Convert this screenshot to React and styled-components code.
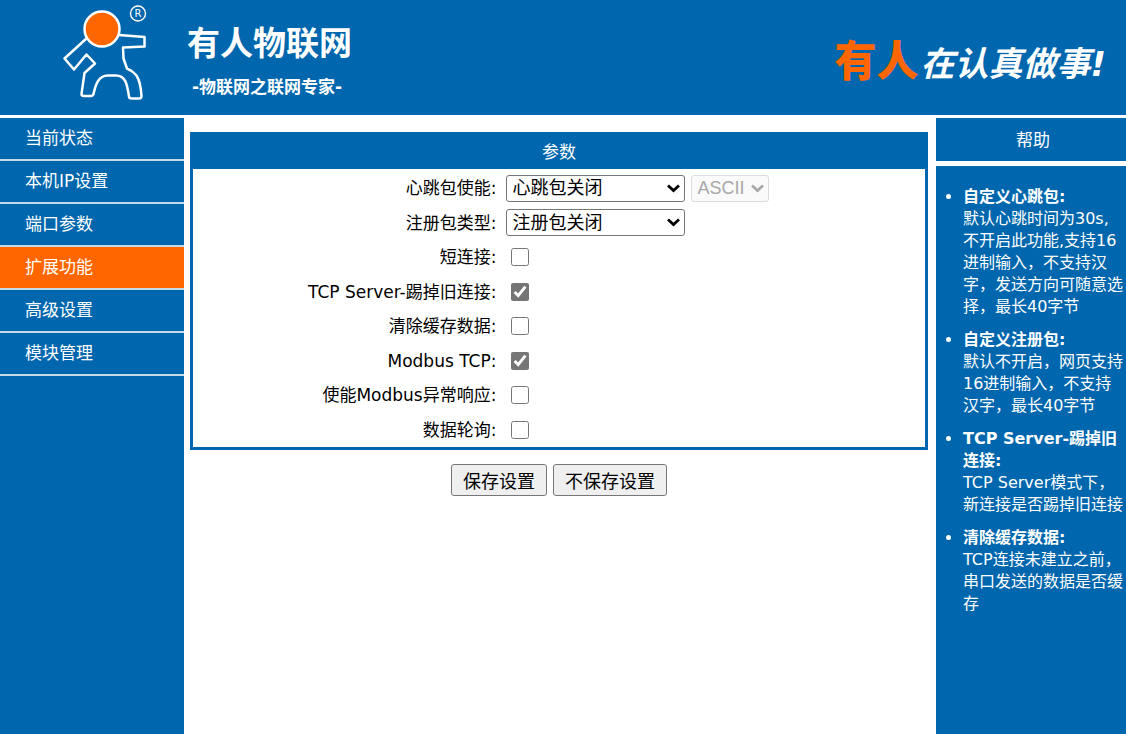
import { useState } from "react";
import styled, { createGlobalStyle } from "styled-components";

const GlobalStyle = createGlobalStyle`
  * {
    box-sizing: border-box;
  }

  body {
    margin: 0;
    background: #fff;
    font-family: "DejaVu Sans", "Noto Sans CJK SC", sans-serif;
    font-size: 17px;
    line-height: 22px;
    color: #000;
  }
`;

const Page = styled.div`
  display: flex;
  flex-direction: column;
  min-height: 100vh;
`;

const Header = styled.header`
  display: flex;
  align-items: flex-start;
  padding: 0 20px 7px 56px;
  background: #0066ad;
  border-bottom: 3px solid #fff;
  color: #fff;
`;

const Logo = styled.svg`
  width: 100px;
  height: 108px;
  flex-shrink: 0;
`;

const Brand = styled.div`
  margin-left: 31px;
  padding-top: 20px;
`;

const BrandName = styled.h1`
  margin: 0;
  font-size: 33px;
  line-height: 48px;
`;

const BrandNote = styled.p`
  margin: 8px 0 0 5px;
  font-weight: bold;
`;

const Slogan = styled.p`
  margin: 0 0 0 auto;
  padding-top: 32px;
  font-size: 34px;
  line-height: 60px;
  font-weight: bold;
  font-style: italic;
  white-space: nowrap;

  strong {
    margin-right: 2px;
    font-size: 42px;
    font-style: normal;
    color: #ff6600;
  }
`;

const Columns = styled.div`
  flex: 1;
  display: grid;
  grid-template-columns: 184px minmax(0, 1fr) 190px;
`;

const Nav = styled.nav`
  background: #0066ad;
`;

const NavLink = styled.a`
  display: block;
  padding: 9px 25px 10px;
  border-bottom: 2px solid #c4daea;
  background: ${props => props.$active ? "#ff6600" : "#0066ad"};
  color: #fff;
  text-decoration: none;
`;

const Main = styled.main`
  padding: 14px 8px 0 6px;
`;

const Panel = styled.section`
  border: 3px solid #0066ad;
`;

const PanelTitle = styled.h2`
  margin: 0;
  padding: 6px 0;
  background: #0066ad;
  color: #fff;
  font-size: 17px;
  font-weight: normal;
  text-align: center;
`;

const Fields = styled.div`
  display: grid;
  grid-auto-rows: 1fr;
  min-height: 278px;
  padding-top: 2px;
`;

const Field = styled.div`
  display: grid;
  grid-template-columns: 42% 1fr;
  align-items: center;
  gap: 6px;
`;

const Label = styled.label`
  padding-right: 4px;
  text-align: right;
`;

const Controls = styled.div`
  display: flex;
  align-items: center;
  gap: 6px;
`;

const SelectBox = styled.div`
  position: relative;
  display: flex;
  width: ${props => props.$small ? "78px" : "179px"};

  svg {
    position: absolute;
    right: 5px;
    top: 9px;
    width: 13px;
    height: 9px;
    color: ${props => props.$small ? "#a8a8a8" : "#000"};
    pointer-events: none;
  }
`;

const Select = styled.select`
  appearance: none;
  width: 100%;
  height: 27px;
  padding: 0 5px;
  border: 1px solid #767676;
  border-radius: 3px;
  background: #fff;
  color: #000;
  font-family: "Liberation Sans", "Noto Sans CJK SC", sans-serif;
  font-size: 18px;

  &:disabled {
    border-color: #dcdcdc;
    background: #fafafa;
    color: #a8a8a8;
    opacity: 1;
  }
`;

const Checkbox = styled.input`
  width: 18px;
  height: 18px;
  margin: 0 5px;
  accent-color: #767676;
`;

const Actions = styled.div`
  display: flex;
  justify-content: center;
  gap: 6px;
  padding-top: 14px;
`;

const Button = styled.button`
  height: 32px;
  padding: 0 11px;
  border: 1px solid #767676;
  border-radius: 3px;
  background: #efefef;
  color: #000;
  font-family: "Liberation Sans", "Noto Sans CJK SC", sans-serif;
  font-size: 18px;
`;

const Help = styled.aside`
  display: flex;
  flex-direction: column;
  gap: 5px;
  min-width: 0;
  color: #fff;
`;

const HelpTitle = styled.h2`
  margin: 0;
  padding: 11px 0 10px 4px;
  background: #0066ad;
  font-size: 17px;
  font-weight: normal;
  text-align: center;
`;

const HelpList = styled.ul`
  flex: 1;
  margin: 0;
  padding: 20px 3px 20px 27px;
  background: #0066ad;
  font-size: 16px;
`;

const HelpItem = styled.li`
  margin-bottom: 11px;

  b {
    display: block;
  }
`;

const menu = ["当前状态", "本机IP设置", "端口参数", "扩展功能", "高级设置", "模块管理"];

const switches = [
    { id: "short", label: "短连接:", on: false },
    { id: "kick", label: "TCP Server-踢掉旧连接:", on: true },
    { id: "clear", label: "清除缓存数据:", on: false },
    { id: "modbus", label: "Modbus TCP:", on: true },
    { id: "exception", label: "使能Modbus异常响应:", on: false },
    { id: "poll", label: "数据轮询:", on: false },
];

const help = [
    { title: "自定义心跳包:", text: "默认心跳时间为30s,不开启此功能,支持16进制输入，不支持汉字，发送方向可随意选择，最长40字节" },
    { title: "自定义注册包:", text: "默认不开启，网页支持16进制输入，不支持汉字，最长40字节" },
    { title: "TCP Server-踢掉旧连接:", text: "TCP Server模式下，新连接是否踢掉旧连接" },
    { title: "清除缓存数据:", text: "TCP连接未建立之前，串口发送的数据是否缓存" },
];

function Chevron() {
    return (
        <svg viewBox="0 0 13 9" fill="none" stroke="currentColor" strokeWidth="2.8" aria-hidden="true">
            <path d="M1 1.5 6.5 6.5 12 1.5" />
        </svg>
    );
}

function Dropdown({ id, options, small, ...rest }) {
    return (
        <SelectBox $small={small}>
            <Select id={id} {...rest}>
                {options.map(option => <option key={option}>{option}</option>)}
            </Select>
            <Chevron />
        </SelectBox>
    );
}

export default function App() {
    const [checked, setChecked] = useState(
        Object.fromEntries(switches.map(item => [item.id, item.on]))
    );

    return (
        <>
            <GlobalStyle />
            <Page>
                <Header>
                    <Logo viewBox="0 0 100 108" fill="none" stroke="#fff" strokeLinejoin="round" role="img" aria-label="USR">
                        <path
                            strokeWidth="2.5"
                            d="M31 38 8.500 58.500 18 69.500 30.500 54.500 39 63.500 28.500 73 25.500 94Q25.500 96 28 96H34.500Q37 96 37.500 94C39 88 41 75.500 52 75.500H60C69 75.500 71 83 73 96.500Q73 98.500 76 98.500H83Q85.500 98.500 85.500 96C85 88 84 81 80.500 75.500Q77 71 71 68.500L67.500 58.500 67 47.500 88.500 46.500V37L63 35"
                        />
                        <circle cx="46" cy="29" r="17.500" fill="#ff6600" strokeWidth="2.5" />
                        <circle cx="82" cy="13.500" r="7.500" strokeWidth="1.4" />
                        <text x="82" y="17" fill="#fff" stroke="none" fontSize="10" textAnchor="middle">R</text>
                    </Logo>
                    <Brand>
                        <BrandName>有人物联网</BrandName>
                        <BrandNote>-物联网之联网专家-</BrandNote>
                    </Brand>
                    <Slogan><strong>有人</strong>在认真做事!</Slogan>
                </Header>
                <Columns>
                    <Nav>
                        {menu.map(item => (
                            <NavLink key={item} href="#" $active={item === "扩展功能"}>{item}</NavLink>
                        ))}
                    </Nav>
                    <Main>
                        <Panel>
                            <PanelTitle>参数</PanelTitle>
                            <Fields>
                                <Field>
                                    <Label htmlFor="heartbeat">心跳包使能:</Label>
                                    <Controls>
                                        <Dropdown id="heartbeat" options={["心跳包关闭"]} />
                                        <Dropdown id="format" options={["ASCII"]} small disabled aria-label="ASCII" />
                                    </Controls>
                                </Field>
                                <Field>
                                    <Label htmlFor="register">注册包类型:</Label>
                                    <Controls>
                                        <Dropdown id="register" options={["注册包关闭"]} />
                                    </Controls>
                                </Field>
                                {switches.map(item => (
                                    <Field key={item.id}>
                                        <Label htmlFor={item.id}>{item.label}</Label>
                                        <Controls>
                                            <Checkbox
                                                type="checkbox"
                                                id={item.id}
                                                checked={checked[item.id]}
                                                onChange={e => setChecked({ ...checked, [item.id]: e.target.checked })}
                                            />
                                        </Controls>
                                    </Field>
                                ))}
                            </Fields>
                        </Panel>
                        <Actions>
                            <Button type="button">保存设置</Button>
                            <Button type="button">不保存设置</Button>
                        </Actions>
                    </Main>
                    <Help>
                        <HelpTitle>帮助</HelpTitle>
                        <HelpList>
                            {help.map(item => (
                                <HelpItem key={item.title}>
                                    <b>{item.title}</b>
                                    {item.text}
                                </HelpItem>
                            ))}
                        </HelpList>
                    </Help>
                </Columns>
            </Page>
        </>
    );
}
